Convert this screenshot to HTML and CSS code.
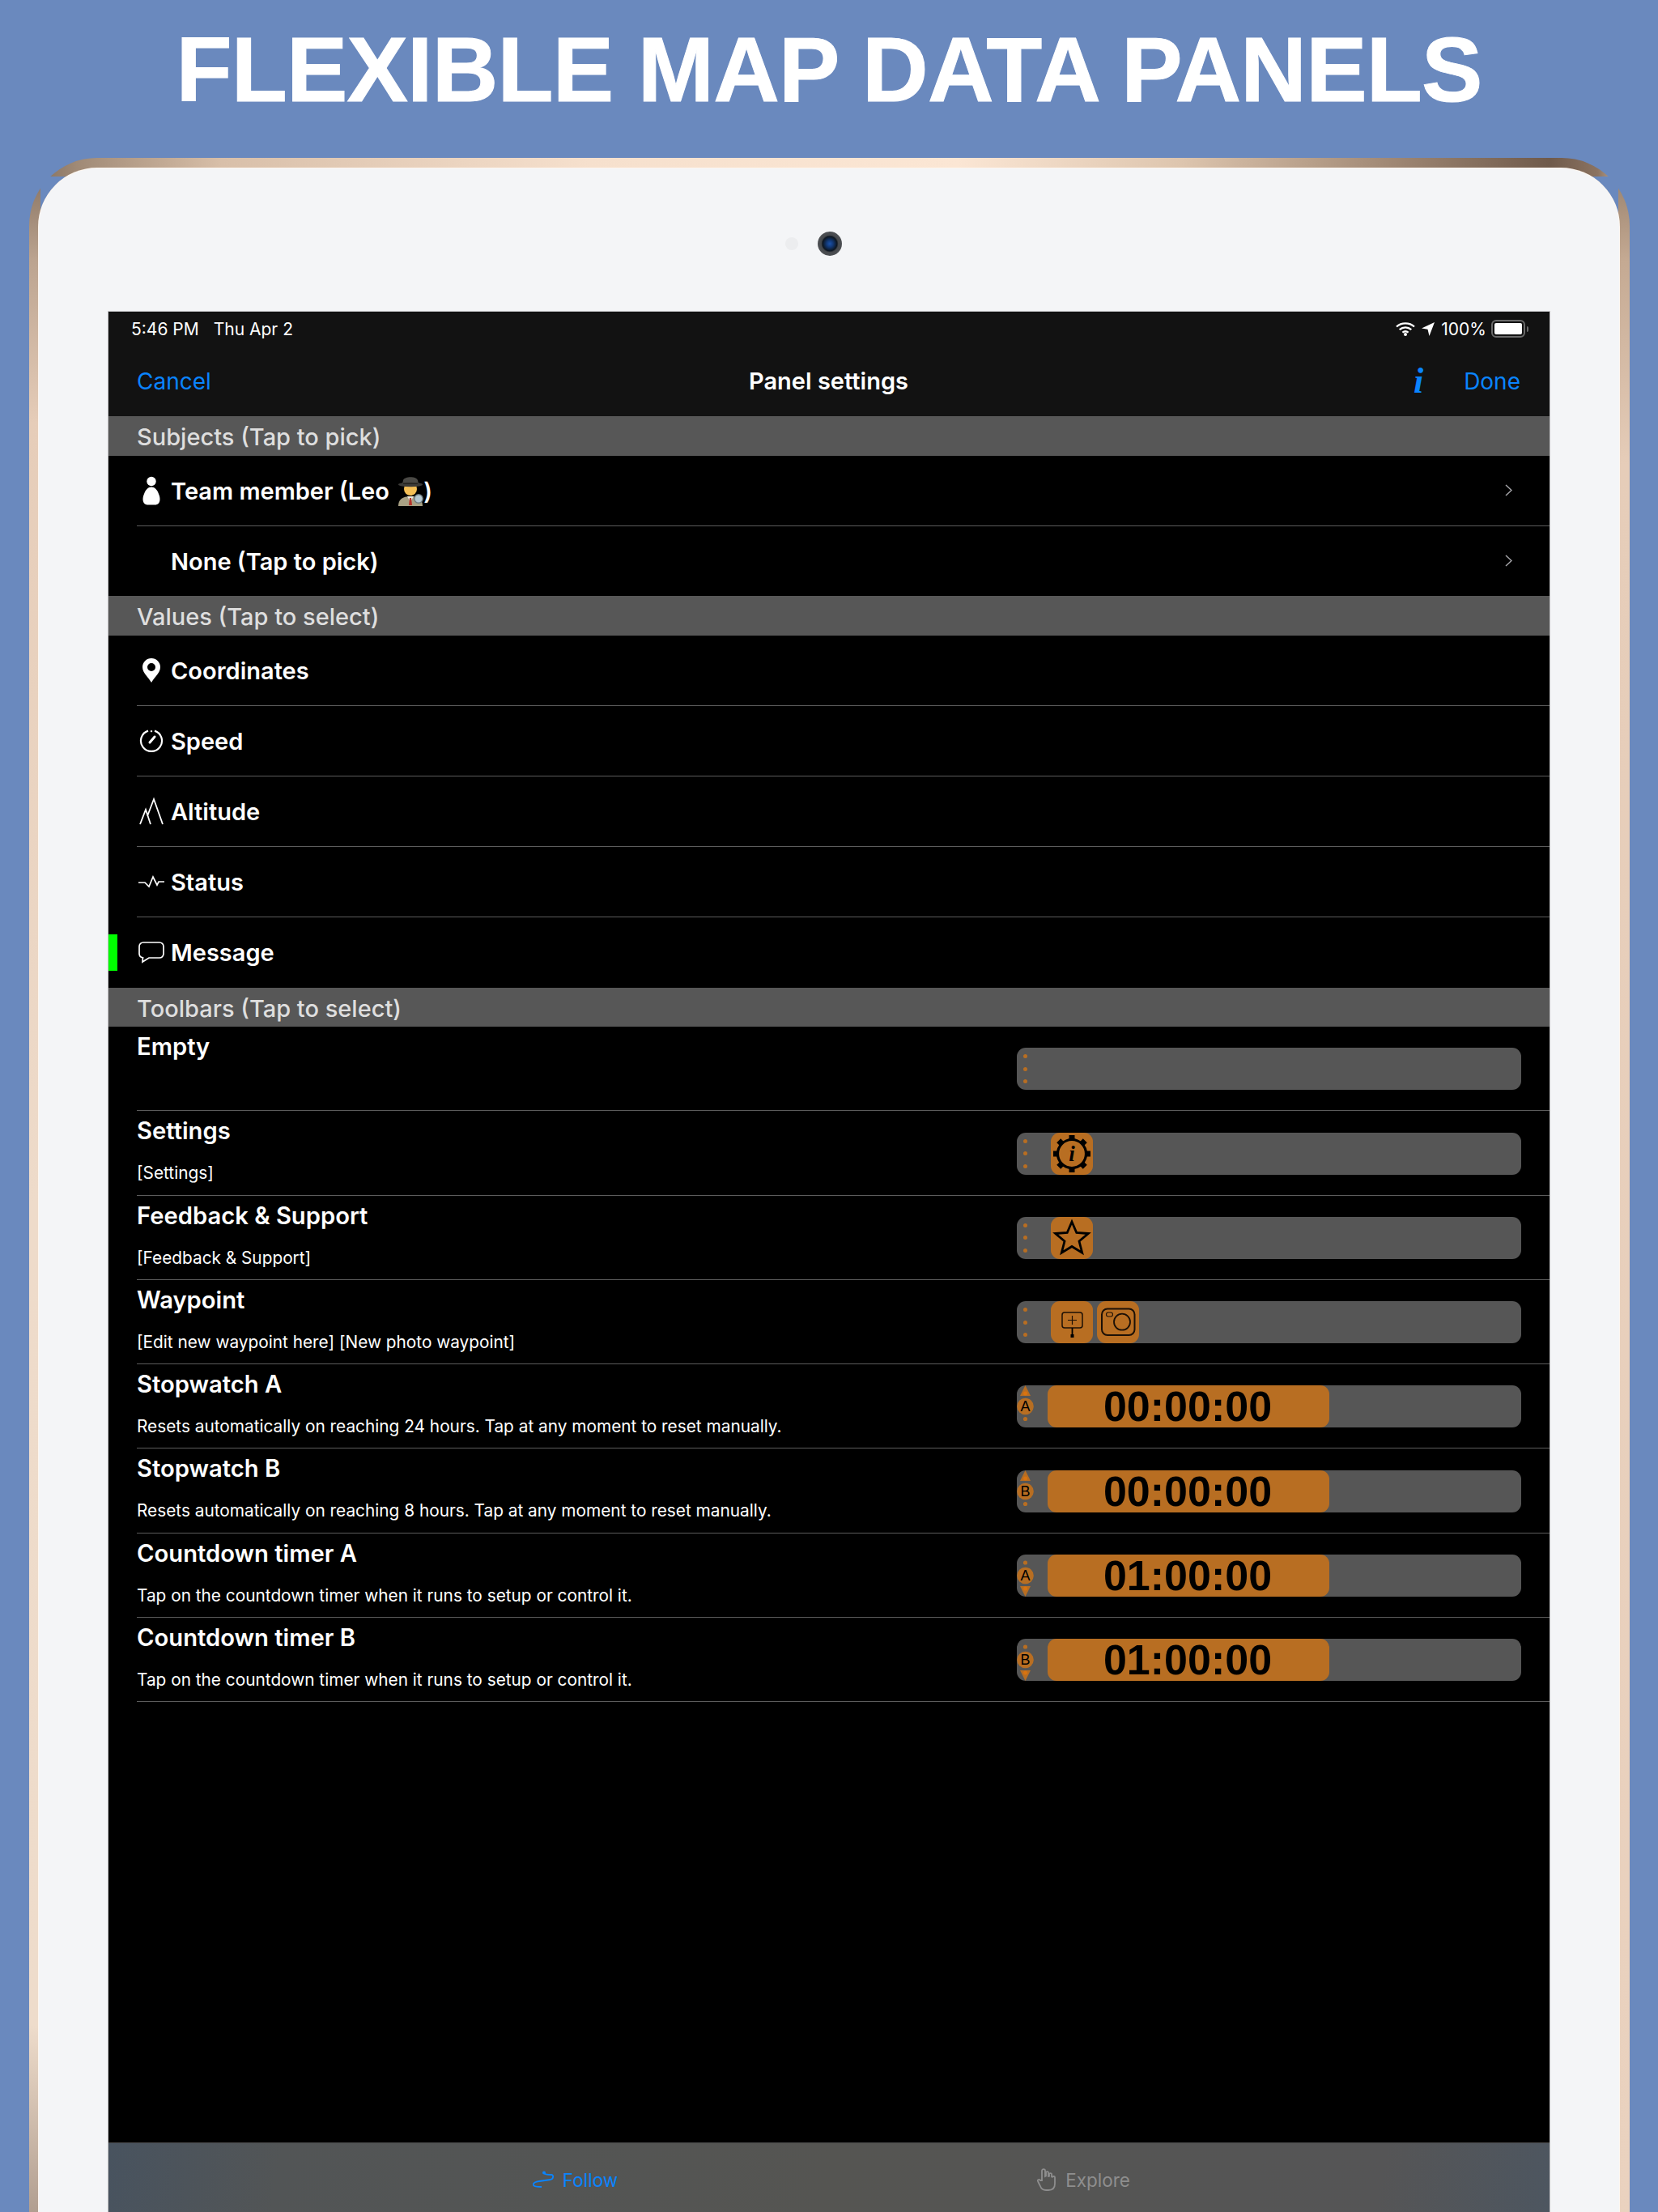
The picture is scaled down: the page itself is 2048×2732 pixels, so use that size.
FILE: index.html
```html
<!DOCTYPE html>
<html lang="en">
<head>
<meta charset="utf-8">
<title>Flexible map data panels</title>
<link rel="stylesheet" href="styles.css">
</head>
<body>
<h1 class="headline">FLEXIBLE MAP DATA PANELS</h1>
<div class="device">
  <div class="bezel">
    <div class="sensors"><span class="sensor"></span><span class="camera"></span></div>
    <main class="screen">
      <header class="chrome">
        <div class="status">
          <span class="status-time">5:46 PM</span><span class="status-date">Thu Apr 2</span>
          <span class="status-right">
            <svg class="ic-wifi" viewBox="0 0 24 18"><path d="M1 6.5C7 1 17 1 23 6.5M4.7 10.2C9 6.4 15 6.4 19.3 10.2M8.4 13.6c2.2-1.7 5-1.7 7.2 0" fill="none" stroke="#fff" stroke-width="2.3"/><circle cx="12" cy="16" r="2" fill="#fff"/></svg>
            <svg class="ic-loc" viewBox="0 0 16 17"><path d="M16 0L0 7.5l7.5 1.2L9.5 17z" fill="#fff"/></svg>
            <span class="status-pct">100%</span>
            <span class="battery"><span class="battery-fill"></span></span><span class="battery-nub"></span>
          </span>
        </div>
        <nav class="navbar">
          <span class="nav-link">Cancel</span>
          <span class="nav-title">Panel settings</span>
          <span class="nav-actions"><span class="nav-info">i</span><span class="nav-link">Done</span></span>
        </nav>
      </header>

      <div class="section">Subjects (Tap to pick)</div>
      <div class="row">
        <span class="row-icon"><svg width="26" height="36" viewBox="0 0 26 36"><circle cx="13" cy="6.5" r="5.7" fill="#fff"/><path d="M13 13.5c-4 0-7 3-9 8.5-2 4.500-2 9 0 11.500 1 1.500 3 2 5 2h8c2 0 4-.5 5-2 2-2.500 2-7 0-11.500-2-5.500-5-8.500-9-8.500z" fill="#fff"/></svg></span>
        <span class="row-label">Team member (Leo <svg class="emoji" viewBox="0 0 32 37" role="img" aria-label="detective"><path d="M1 37c0-8 5-12 15-12s15 4 15 12z" fill="#a9a184"/><path d="M12 25l4 7 4-7z" fill="#efeadb"/><path d="M15 27h2l1 9h-4z" fill="#b5342a"/><circle cx="16" cy="16" r="8" fill="#f5bf55"/><path d="M8 13c0-7 16-7 16 0z" fill="#7a4a22"/><path d="M7 5c2-5 16-5 18 0l1 5H6z" fill="#4a4945"/><ellipse cx="16" cy="10.500" rx="15" ry="2.700" fill="#3c3b38"/><path d="M7 8.500h18v1.500H7z" fill="#24231f"/><circle cx="26" cy="28" r="5.200" fill="#b4c7d1" stroke="#6f7c80" stroke-width="1.400"/></svg>)</span>
        <svg class="chevron" viewBox="0 0 9 15"><path d="M1 1l7 6.500-7 6.500" fill="none" stroke="#a5a5a9" stroke-width="1.500"/></svg>
      </div>
      <div class="row row-last">
        <span class="row-icon"></span>
        <span class="row-label">None (Tap to pick)</span>
        <svg class="chevron" viewBox="0 0 9 15"><path d="M1 1l7 6.500-7 6.500" fill="none" stroke="#a5a5a9" stroke-width="1.500"/></svg>
      </div>

      <div class="section">Values (Tap to select)</div>
      <div class="row">
        <span class="row-icon"><svg width="24" height="32" viewBox="0 0 24 32"><path fill-rule="evenodd" d="M12 1a11 11 0 0 1 11 11c0 7-7 12-11 19C8 24 1 19 1 12A11 11 0 0 1 12 1zm0 6a5 5 0 1 0 0 10 5 5 0 0 0 0-10z" fill="#fff"/></svg></span>
        <span class="row-label">Coordinates</span>
      </div>
      <div class="row">
        <span class="row-icon"><svg width="30" height="30" viewBox="0 0 30 30"><path d="M19 2.600A13 13 0 1 1 11 2.600" fill="none" stroke="#fff" stroke-width="2.200"/><path d="M15 2.200v2" stroke="#fff" stroke-width="2.200"/><path d="M13 17l6-7" stroke="#fff" stroke-width="3" stroke-linecap="round"/></svg></span>
        <span class="row-label">Speed</span>
      </div>
      <div class="row">
        <span class="row-icon"><svg width="30" height="35" viewBox="0 0 30 35"><path d="M1 34L8 16l6 18M10 24L18 3l11 31" fill="none" stroke="#fff" stroke-width="1.800"/></svg></span>
        <span class="row-label">Altitude</span>
      </div>
      <div class="row">
        <span class="row-icon"><svg width="32" height="16" viewBox="0 0 32 16"><path d="M0 9h8l5 5 5-12 5 10 2-4h7" fill="none" stroke="#fff" stroke-width="1.700"/></svg></span>
        <span class="row-label">Status</span>
      </div>
      <div class="row row-last row-selected">
        <span class="row-icon"><svg width="32" height="27" viewBox="0 0 32 27"><path d="M6 1h20a5 5 0 0 1 5 5v9a5 5 0 0 1-5 5H13l-8 5 .500-5.200A5 5 0 0 1 1 15V6a5 5 0 0 1 5-5z" fill="none" stroke="#fff" stroke-width="1.700"/></svg></span>
        <span class="row-label">Message</span>
      </div>

      <div class="section">Toolbars (Tap to select)</div>

      <div class="tool-row">
        <div class="tool-text"><div class="tool-title">Empty</div></div>
        <div class="toolbar"><div class="grip"><i></i><i></i><i></i></div></div>
      </div>
      <div class="tool-row">
        <div class="tool-text"><div class="tool-title">Settings</div><div class="tool-sub">[Settings]</div></div>
        <div class="toolbar"><div class="grip"><i></i><i></i><i></i></div>
          <div class="tool-btn"><svg viewBox="0 0 52 52">
            <circle cx="26" cy="26" r="17.500" fill="none" stroke="#000" stroke-width="3.200"/>
            <g fill="#000"><rect x="22.500" y="3" width="7" height="6"/><rect x="22.500" y="43" width="7" height="6"/><rect x="3" y="22.500" width="6" height="7"/><rect x="43" y="22.500" width="6" height="7"/>
            <rect x="22.500" y="3" width="7" height="6" transform="rotate(45 26 26)"/><rect x="22.500" y="3" width="7" height="6" transform="rotate(135 26 26)"/><rect x="22.500" y="3" width="7" height="6" transform="rotate(225 26 26)"/><rect x="22.500" y="3" width="7" height="6" transform="rotate(315 26 26)"/></g>
            <text class="gear-i" x="26" y="35" text-anchor="middle">i</text></svg></div>
        </div>
      </div>
      <div class="tool-row">
        <div class="tool-text"><div class="tool-title">Feedback &amp; Support</div><div class="tool-sub">[Feedback &amp; Support]</div></div>
        <div class="toolbar"><div class="grip"><i></i><i></i><i></i></div>
          <div class="tool-btn"><svg viewBox="0 0 52 52"><path d="M26 6l5.800 13.500 14.500 1L35 30l3.700 14.200L26 36.500l-12.700 7.700L17 30 5.700 20.500l14.500-1z" fill="none" stroke="#000" stroke-width="2.800"/></svg></div>
        </div>
      </div>
      <div class="tool-row">
        <div class="tool-text"><div class="tool-title">Waypoint</div><div class="tool-sub">[Edit new waypoint here] [New photo waypoint]</div></div>
        <div class="toolbar"><div class="grip"><i></i><i></i><i></i></div>
          <div class="tool-btn"><svg viewBox="0 0 52 52"><rect x="14" y="14" width="25" height="19" rx="3" fill="none" stroke="#1c1006" stroke-width="1.500"/><path d="M26.500 18v11M21 23.500h11" stroke="#1c1006" stroke-width="1.200"/><path d="M26.500 33v9" stroke="#000" stroke-width="1.800"/><rect x="24.500" y="41" width="4" height="4" fill="#000"/></svg></div>
          <div class="tool-btn"><svg viewBox="0 0 52 52"><rect x="6" y="9.500" width="40.500" height="32.500" rx="7" fill="none" stroke="#1c1006" stroke-width="2"/><circle cx="31" cy="25.700" r="10" fill="none" stroke="#1c1006" stroke-width="1.800"/><rect x="11.500" y="14" width="8" height="5" rx="2.500" fill="none" stroke="#1c1006" stroke-width="1.100"/></svg></div>
        </div>
      </div>
      <div class="tool-row">
        <div class="tool-text"><div class="tool-title">Stopwatch A</div><div class="tool-sub">Resets automatically on reaching 24 hours. Tap at any moment to reset manually.</div></div>
        <div class="toolbar"><svg class="handle" viewBox="0 0 21 52"><path d="M10.500 0l6.500 13H4z" fill="#b86e22"/><circle cx="10.500" cy="10" r="2.500" fill="#d9730f"/><circle cx="10.500" cy="26" r="10.300" fill="#b86e22"/><text class="handle-l" x="10.500" y="32" text-anchor="middle">A</text><circle cx="10.500" cy="41.500" r="2.600" fill="#b86e22"/></svg><div class="timer">00:00:00</div></div>
      </div>
      <div class="tool-row">
        <div class="tool-text"><div class="tool-title">Stopwatch B</div><div class="tool-sub">Resets automatically on reaching 8 hours. Tap at any moment to reset manually.</div></div>
        <div class="toolbar"><svg class="handle" viewBox="0 0 21 52"><path d="M10.500 0l6.500 13H4z" fill="#b86e22"/><circle cx="10.500" cy="10" r="2.500" fill="#d9730f"/><circle cx="10.500" cy="26" r="10.300" fill="#b86e22"/><text class="handle-l" x="10.500" y="32" text-anchor="middle">B</text><circle cx="10.500" cy="41.500" r="2.600" fill="#b86e22"/></svg><div class="timer">00:00:00</div></div>
      </div>
      <div class="tool-row">
        <div class="tool-text"><div class="tool-title">Countdown timer A</div><div class="tool-sub">Tap on the countdown timer when it runs to setup or control it.</div></div>
        <div class="toolbar"><svg class="handle" viewBox="0 0 21 52"><circle cx="10.500" cy="10" r="2.600" fill="#b86e22"/><circle cx="10.500" cy="26" r="10.300" fill="#b86e22"/><text class="handle-l" x="10.500" y="32" text-anchor="middle">A</text><path d="M10.500 52l6.500-13H4z" fill="#b86e22"/><circle cx="10.500" cy="42" r="2.500" fill="#d9730f"/></svg><div class="timer">01:00:00</div></div>
      </div>
      <div class="tool-row">
        <div class="tool-text"><div class="tool-title">Countdown timer B</div><div class="tool-sub">Tap on the countdown timer when it runs to setup or control it.</div></div>
        <div class="toolbar"><svg class="handle" viewBox="0 0 21 52"><circle cx="10.500" cy="10" r="2.600" fill="#b86e22"/><circle cx="10.500" cy="26" r="10.300" fill="#b86e22"/><text class="handle-l" x="10.500" y="32" text-anchor="middle">B</text><path d="M10.500 52l6.500-13H4z" fill="#b86e22"/><circle cx="10.500" cy="42" r="2.500" fill="#d9730f"/></svg><div class="timer">01:00:00</div></div>
      </div>

      <div class="spacer"></div>
      <footer class="tabbar">
        <div class="tab tab-active">
          <svg width="28" height="22" viewBox="0 0 28 22"><circle cx="15" cy="2.500" r="2" fill="#0a84ff"/><path d="M15 3c1 2 5 2 9 2 3 0 3 5-1 6l-14 2c-4 .500-8 2-7 5 1 2 5 2 10 2" fill="none" stroke="#0a84ff" stroke-width="1.800"/></svg>
          <span>Follow</span>
        </div>
        <div class="tab">
          <svg width="26" height="28" viewBox="0 0 26 28"><path d="M7 15V3c0-2.500 4-2.500 4 0v7l1-.5V5c0-1 3-1 3 0v5l1-.2V7c0-1 3-1 3 0v3.500l1 .2c0-1 3-1 3 .5V19c0 5-3 8-8 8h-3c-4 0-6-2-7-5l-3-6c-1-2 2-3 3-1z" fill="none" stroke="#8e8e8e" stroke-width="1.800"/></svg>
          <span>Explore</span>
        </div>
      </footer>
    </main>
  </div>
</div>
</body>
</html>
```
FILE: styles.css
```css
* { box-sizing: border-box; }
html, body { margin: 0; height: 2732px; overflow: hidden; }
body {
  background: #6a89be;
  font-family: "Inter", "Liberation Sans", sans-serif;
  color: #fff;
  display: flex;
  flex-direction: column;
}
.headline {
  margin: 0;
  height: 195px;
  flex: none;
  display: flex;
  align-items: center;
  justify-content: center;
  padding-bottom: 23px;
  font: bold 113px "Liberation Sans", sans-serif;
  letter-spacing: -.8px;
  -webkit-text-stroke: 1px #fff;
}
.device {
  flex: 1;
  margin: 0 35px 0 36px;
  padding: 13px 13px 0 12px;
  border-radius: 84px 84px 0 0;
  background:
    linear-gradient(90deg, #7f6b59 0, #a08a76 3%, #d8bfa9 12%, #f6e0cd 35%, #fbe6d4 58%, #ddc5ae 72%, #a58d79 84%, #6f5a4b 95%, #8b7361 98%, #e8cdb3 100%) 0 0 / 100% 23px no-repeat,
    linear-gradient(180deg, #8a7563 0, #bba38f 4%, #e6cdb9 12%, #eedbca 50%, #eedccb 90%, #ab988a 100%) 0 23px / 14px 100% no-repeat,
    linear-gradient(180deg, #9a836f 0, #c4a992 4%, #e6cdb9 14%, #ead2bf 100%) 100% 23px / 14px 100% no-repeat;
}
.bezel {
  height: 100%;
  background: #f4f5f7;
  border-radius: 72px 72px 0 0;
  box-shadow: 0 0 0 1px #fdf6ef;
  padding: 0 86px;
  display: flex;
  flex-direction: column;
}
.sensors {
  height: 177px;
  flex: none;
  display: flex;
  align-items: center;
  justify-content: center;
  gap: 24px;
  padding-right: 38px;
  padding-top: 9px;
}
.sensor { width: 16px; height: 16px; border-radius: 50%; background: #ecedef; }
.camera {
  width: 30px; height: 30px; border-radius: 50%;
  background: radial-gradient(circle at 50% 50%, #1c52a8 0, #123a7a 18%, #0d1620 42%, #45484c 50%, #5b5d60 100%);
}
.screen {
  flex: 1;
  display: flex;
  flex-direction: column;
  background: #000;
  box-shadow: 0 0 0 1px rgba(130,130,130,.45);
  min-height: 0;
}
.chrome { background: #121212; flex: none; }
.status {
  height: 42px;
  padding: 0 26px 0 28px;
  display: flex;
  align-items: center;
  font-size: 21px;
  font-weight: 400;
}
.status-date { margin-left: 18px; }
.status-right { margin-left: auto; display: flex; align-items: center; }
.ic-wifi { width: 24px; height: 18px; }
.ic-loc { width: 16px; height: 17px; margin-left: 8px; }
.status-pct { margin-left: 8px; }
.battery {
  width: 42px; height: 22px; margin-left: 6px;
  border: 2px solid #6a6a6a; border-radius: 6px; padding: 2px; display: block;
}
.battery-fill { display: block; height: 100%; background: #fff; border-radius: 2px; }
.battery-nub { width: 2px; height: 7px; margin-left: 2px; background: #6a6a6a; border-radius: 0 2px 2px 0; }
.navbar {
  height: 87px;
  display: grid;
  grid-template-columns: 1fr auto 1fr;
  align-items: center;
  padding: 0 36px 0 35px;
  font-size: 28px;
}
.nav-link { color: #0a84ff; }
.nav-title { font-weight: 600; font-size: 29px; }
.nav-actions { justify-self: end; display: flex; align-items: center; gap: 50px; }
.nav-info {
  color: #0a84ff;
  font: italic bold 44px "Liberation Serif", serif;
  line-height: 44px;
}
.section {
  height: 48.670px;
  flex: none;
  background: #575757;
  color: #dedede;
  font-size: 29px;
  font-weight: 500;
  padding-left: 35px;
  line-height: 51px;
}
.row {
  height: 86.900px;
  flex: none;
  margin-left: 35px;
  border-bottom: 1px solid #5c5c5c;
  display: flex;
  align-items: center;
  position: relative;
}
.row-last { border-bottom: 0; }
.row-selected::before {
  content: "";
  position: absolute;
  left: -35px; top: 21px;
  width: 11px; height: 45px;
  background: #00ff00;
}
.row-icon { width: 35px; display: flex; justify-content: center; align-items: center; flex: none; }
.row-label { margin-left: 7px; padding-top: 1px; font-size: 29px; font-weight: 600; display: flex; align-items: center; white-space: pre; }
.emoji { width: 32px; height: 37px; margin-left: 3px; }
.chevron { width: 9px; height: 15px; margin-left: auto; margin-right: 46px; }
.tool-row {
  height: 104.250px;
  flex: none;
  margin-left: 35px;
  padding-right: 35px;
  padding-top: 1px;
  border-bottom: 1px solid #5c5c5c;
  display: flex;
  align-items: center;
  justify-content: space-between;
}
.tool-text { align-self: flex-start; padding-top: 7px; }
.tool-title { font-size: 29.200px; font-weight: 600; line-height: 34px; }
.tool-sub { font-size: 20.800px; line-height: 28px; margin-top: 21px; }
.toolbar {
  width: 623px;
  height: 52px;
  flex: none;
  background: #565656;
  border-radius: 11px;
  display: flex;
}
.grip {
  width: 20px;
  height: 100%;
  padding: 8px 0;
  display: flex;
  flex-direction: column;
  align-items: center;
  justify-content: space-between;
  margin-right: 22px;
}
.grip i { width: 5px; height: 5px; border-radius: 50%; background: #b86e22; }
.tool-btn {
  width: 52px; height: 52px; margin-right: 5px;
  background: #b86e22; border-radius: 11px; flex: none;
}
.tool-btn svg { display: block; width: 52px; height: 52px; }
.gear-i { font: italic bold 27px "Liberation Serif", serif; fill: #000; }
.handle { width: 21px; height: 52px; flex: none; margin-right: 17px; }
.handle-l { font: 18px "Liberation Sans", sans-serif; fill: #000; }
.timer {
  width: 348px;
  height: 52px;
  background: #b86e22;
  border-radius: 11px;
  color: #000;
  font: bold 52px/52px "Liberation Sans", sans-serif;
  text-align: center;
  padding-right: 2px;
}
.spacer { flex: 1; }
.tabbar {
  height: 86px;
  flex: none;
  border-top: 1px solid #444;
  background: linear-gradient(100deg, #48535f 0, #525556 12%, #555552 50%, #555556 88%, #4d5660 100%);
  display: flex;
  justify-content: center;
  padding-top: 28px;
  color: #8e8e8e;
  font-size: 22.500px;
}
.tab { width: 628px; height: 34px; display: flex; align-items: center; justify-content: center; gap: 10px; }
.tab-active { color: #0a84ff; }
```
